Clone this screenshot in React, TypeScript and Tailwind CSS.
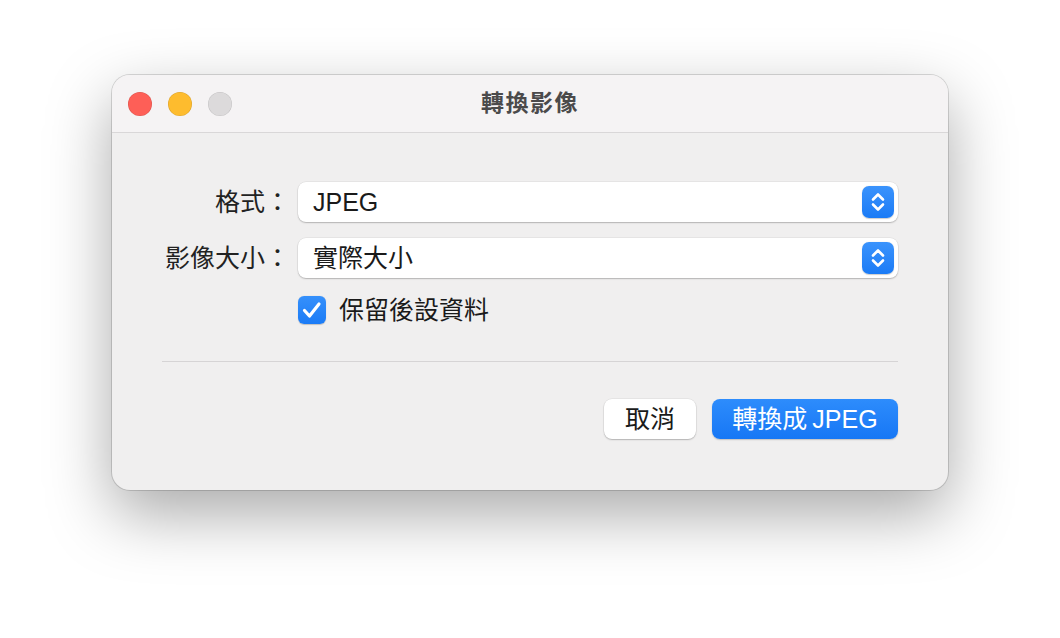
import React from "react";

const FONT = '"Liberation Sans", "Noto Sans CJK TC", sans-serif';

function Stepper() {
  return (
    <div className="w-[32px] h-[32px] rounded-[7px] bg-gradient-to-b from-[#3a93fc] to-[#1a7bf6] flex items-center justify-center shadow-[0_0.5px_1px_rgba(0,0,0,0.2)]">
      <svg width="32" height="32" viewBox="0 0 32 32" fill="none">
        <path d="M11 13.5L16 8.5L21 13.5" stroke="white" strokeWidth="2.6" strokeLinecap="round" strokeLinejoin="round" />
        <path d="M11 18.5L16 23.5L21 18.5" stroke="white" strokeWidth="2.6" strokeLinecap="round" strokeLinejoin="round" />
      </svg>
    </div>
  );
}

function Popup({ value }: { value: string }) {
  return (
    <div className="flex-1 h-[40px] bg-white rounded-[8px] shadow-[0_0_0_0.5px_rgba(0,0,0,0.08),0_1px_1.5px_rgba(0,0,0,0.22)] flex items-center justify-between pl-[15px] pr-[4px]">
      <span className="text-[25px] text-[#1a1a1a] leading-none">{value}</span>
      <Stepper />
    </div>
  );
}

export default function App() {
  return (
    <div className="w-[1060px] h-[638px] bg-white overflow-hidden pt-[75px]" style={{ fontFamily: FONT }}>
      <div className="ml-[112px] w-[836px] h-[415px] rounded-[18px] bg-[#f0efef] shadow-[0_0_0_1px_rgba(0,0,0,0.14),0_24px_64px_rgba(0,0,0,0.34)] overflow-hidden flex flex-col">
        {/* Title bar */}
        <div className="relative h-[58px] bg-[#f5f3f4] border-b border-[#d9d7d8] flex items-center shrink-0">
          <div className="flex items-center gap-[16px] pl-[16px]">
            <div className="w-[24px] h-[24px] rounded-full bg-[#fe5f57] shadow-[inset_0_0_0_0.5px_rgba(0,0,0,0.15)]" />
            <div className="w-[24px] h-[24px] rounded-full bg-[#febc2e] shadow-[inset_0_0_0_0.5px_rgba(0,0,0,0.15)]" />
            <div className="w-[24px] h-[24px] rounded-full bg-[#dcdadb] shadow-[inset_0_0_0_0.5px_rgba(0,0,0,0.12)]" />
          </div>
          <div className="absolute inset-0 flex items-center justify-center pointer-events-none">
            <span className="text-[23px] font-bold text-[#4b4a4b] tracking-[1.5px]">轉換影像</span>
          </div>
        </div>

        {/* Body */}
        <div className="flex-1 px-[50px] pt-[49px] flex flex-col">
          <div className="flex items-center">
            <div className="w-[128px] text-right text-[25px] text-[#222222] leading-none">格式：</div>
            <div className="ml-[8px] flex-1 flex">
              <Popup value="JPEG" />
            </div>
          </div>
          <div className="flex items-center mt-[16px]">
            <div className="w-[128px] text-right text-[25px] text-[#222222] leading-none">影像大小：</div>
            <div className="ml-[8px] flex-1 flex">
              <Popup value="實際大小" />
            </div>
          </div>
          <div className="flex items-center mt-[18px] ml-[136px]">
            <div className="w-[28px] h-[28px] rounded-[6px] bg-gradient-to-b from-[#3590fb] to-[#1a7bf6] flex items-center justify-center shadow-[0_0.5px_1px_rgba(0,0,0,0.2)]">
              <svg width="28" height="28" viewBox="0 0 28 28" fill="none">
                <path d="M6.5 14.5L11.5 20L21 8" stroke="white" strokeWidth="3.2" strokeLinecap="round" strokeLinejoin="round" />
              </svg>
            </div>
            <span className="ml-[13px] text-[25px] text-[#1a1a1a] leading-none">保留後設資料</span>
          </div>

          <div className="mt-[37px] h-px bg-[#d6d4d5]" />

          <div className="mt-[37px] flex justify-end gap-[16px]">
            <button className="w-[92px] h-[40px] rounded-[8px] bg-white shadow-[0_0_0_0.5px_rgba(0,0,0,0.08),0_1px_1.5px_rgba(0,0,0,0.22)] text-[25px] text-[#1a1a1a] leading-none flex items-center justify-center">
              取消
            </button>
            <button className="w-[186px] h-[40px] rounded-[8px] bg-gradient-to-b from-[#2d8cfc] to-[#1677f5] shadow-[0_1px_1.5px_rgba(0,0,0,0.2)] text-[25px] text-white leading-none flex items-center justify-center">
              轉換成<span className="ml-[5px]">JPEG</span>
            </button>
          </div>
        </div>
      </div>
    </div>
  );
}
